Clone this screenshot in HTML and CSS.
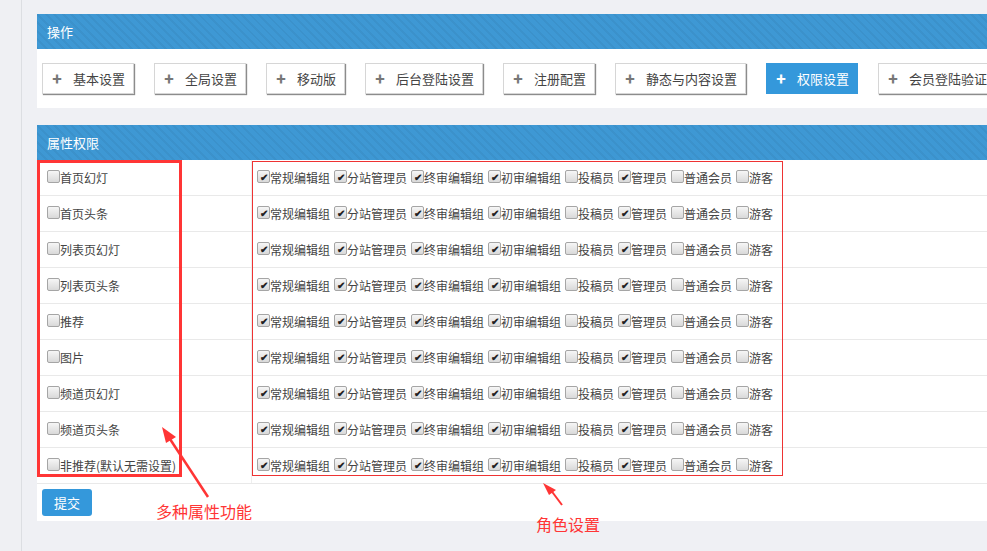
FILE: index.html
```html
<!DOCTYPE html>
<html lang="zh-CN">
<head>
    <meta charset="UTF-8">
    <title>权限设置</title>
    <link rel="stylesheet" href="styles.css">
</head>
<body>

    <div class="sidebar"></div>

    <div class="main">
        <div class="panel">
            <div class="panel-head">操作</div>
            <div class="panel-body toolbar">
                <a class="tool-btn"><span class="plus">✚</span>基本设置</a>
                <a class="tool-btn"><span class="plus">✚</span>全局设置</a>
                <a class="tool-btn"><span class="plus">✚</span>移动版</a>
                <a class="tool-btn"><span class="plus">✚</span>后台登陆设置</a>
                <a class="tool-btn"><span class="plus">✚</span>注册配置</a>
                <a class="tool-btn"><span class="plus">✚</span>静态与内容设置</a>
                <a class="tool-btn active"><span class="plus">✚</span>权限设置</a>
                <a class="tool-btn"><span class="plus">✚</span>会员登陆验证</a>
            </div>
        </div>

        <div class="panel">
            <div class="panel-head">属性权限</div>
            <div class="perm-table">
                <div class="perm-row">
                    <div class="attr"><span class="cb"></span>首页幻灯</div>
                    <div class="roles">
                        <span class="role"><span class="cb on">✔</span>常规编辑组</span>
                        <span class="role"><span class="cb on">✔</span>分站管理员</span>
                        <span class="role"><span class="cb on">✔</span>终审编辑组</span>
                        <span class="role"><span class="cb on">✔</span>初审编辑组</span>
                        <span class="role"><span class="cb"></span>投稿员</span>
                        <span class="role"><span class="cb on">✔</span>管理员</span>
                        <span class="role"><span class="cb"></span>普通会员</span>
                        <span class="role"><span class="cb"></span>游客</span>
                    </div>
                </div>
                <div class="perm-row">
                    <div class="attr"><span class="cb"></span>首页头条</div>
                    <div class="roles">
                        <span class="role"><span class="cb on">✔</span>常规编辑组</span>
                        <span class="role"><span class="cb on">✔</span>分站管理员</span>
                        <span class="role"><span class="cb on">✔</span>终审编辑组</span>
                        <span class="role"><span class="cb on">✔</span>初审编辑组</span>
                        <span class="role"><span class="cb"></span>投稿员</span>
                        <span class="role"><span class="cb on">✔</span>管理员</span>
                        <span class="role"><span class="cb"></span>普通会员</span>
                        <span class="role"><span class="cb"></span>游客</span>
                    </div>
                </div>
                <div class="perm-row">
                    <div class="attr"><span class="cb"></span>列表页幻灯</div>
                    <div class="roles">
                        <span class="role"><span class="cb on">✔</span>常规编辑组</span>
                        <span class="role"><span class="cb on">✔</span>分站管理员</span>
                        <span class="role"><span class="cb on">✔</span>终审编辑组</span>
                        <span class="role"><span class="cb on">✔</span>初审编辑组</span>
                        <span class="role"><span class="cb"></span>投稿员</span>
                        <span class="role"><span class="cb on">✔</span>管理员</span>
                        <span class="role"><span class="cb"></span>普通会员</span>
                        <span class="role"><span class="cb"></span>游客</span>
                    </div>
                </div>
                <div class="perm-row">
                    <div class="attr"><span class="cb"></span>列表页头条</div>
                    <div class="roles">
                        <span class="role"><span class="cb on">✔</span>常规编辑组</span>
                        <span class="role"><span class="cb on">✔</span>分站管理员</span>
                        <span class="role"><span class="cb on">✔</span>终审编辑组</span>
                        <span class="role"><span class="cb on">✔</span>初审编辑组</span>
                        <span class="role"><span class="cb"></span>投稿员</span>
                        <span class="role"><span class="cb on">✔</span>管理员</span>
                        <span class="role"><span class="cb"></span>普通会员</span>
                        <span class="role"><span class="cb"></span>游客</span>
                    </div>
                </div>
                <div class="perm-row">
                    <div class="attr"><span class="cb"></span>推荐</div>
                    <div class="roles">
                        <span class="role"><span class="cb on">✔</span>常规编辑组</span>
                        <span class="role"><span class="cb on">✔</span>分站管理员</span>
                        <span class="role"><span class="cb on">✔</span>终审编辑组</span>
                        <span class="role"><span class="cb on">✔</span>初审编辑组</span>
                        <span class="role"><span class="cb"></span>投稿员</span>
                        <span class="role"><span class="cb on">✔</span>管理员</span>
                        <span class="role"><span class="cb"></span>普通会员</span>
                        <span class="role"><span class="cb"></span>游客</span>
                    </div>
                </div>
                <div class="perm-row">
                    <div class="attr"><span class="cb"></span>图片</div>
                    <div class="roles">
                        <span class="role"><span class="cb on">✔</span>常规编辑组</span>
                        <span class="role"><span class="cb on">✔</span>分站管理员</span>
                        <span class="role"><span class="cb on">✔</span>终审编辑组</span>
                        <span class="role"><span class="cb on">✔</span>初审编辑组</span>
                        <span class="role"><span class="cb"></span>投稿员</span>
                        <span class="role"><span class="cb on">✔</span>管理员</span>
                        <span class="role"><span class="cb"></span>普通会员</span>
                        <span class="role"><span class="cb"></span>游客</span>
                    </div>
                </div>
                <div class="perm-row">
                    <div class="attr"><span class="cb"></span>频道页幻灯</div>
                    <div class="roles">
                        <span class="role"><span class="cb on">✔</span>常规编辑组</span>
                        <span class="role"><span class="cb on">✔</span>分站管理员</span>
                        <span class="role"><span class="cb on">✔</span>终审编辑组</span>
                        <span class="role"><span class="cb on">✔</span>初审编辑组</span>
                        <span class="role"><span class="cb"></span>投稿员</span>
                        <span class="role"><span class="cb on">✔</span>管理员</span>
                        <span class="role"><span class="cb"></span>普通会员</span>
                        <span class="role"><span class="cb"></span>游客</span>
                    </div>
                </div>
                <div class="perm-row">
                    <div class="attr"><span class="cb"></span>频道页头条</div>
                    <div class="roles">
                        <span class="role"><span class="cb on">✔</span>常规编辑组</span>
                        <span class="role"><span class="cb on">✔</span>分站管理员</span>
                        <span class="role"><span class="cb on">✔</span>终审编辑组</span>
                        <span class="role"><span class="cb on">✔</span>初审编辑组</span>
                        <span class="role"><span class="cb"></span>投稿员</span>
                        <span class="role"><span class="cb on">✔</span>管理员</span>
                        <span class="role"><span class="cb"></span>普通会员</span>
                        <span class="role"><span class="cb"></span>游客</span>
                    </div>
                </div>
                <div class="perm-row">
                    <div class="attr"><span class="cb"></span>非推荐(默认无需设置)</div>
                    <div class="roles">
                        <span class="role"><span class="cb on">✔</span>常规编辑组</span>
                        <span class="role"><span class="cb on">✔</span>分站管理员</span>
                        <span class="role"><span class="cb on">✔</span>终审编辑组</span>
                        <span class="role"><span class="cb on">✔</span>初审编辑组</span>
                        <span class="role"><span class="cb"></span>投稿员</span>
                        <span class="role"><span class="cb on">✔</span>管理员</span>
                        <span class="role"><span class="cb"></span>普通会员</span>
                        <span class="role"><span class="cb"></span>游客</span>
                    </div>
                </div>
            </div>
            <div class="form-foot">
                <button class="submit-btn">提交</button>
            </div>
        </div>
    </div>

    <!-- 标注 -->
    <div class="mark-box mark-attr"></div>
    <div class="mark-box mark-roles"></div>
    <svg class="mark-arrows" width="987" height="551" viewBox="0 0 987 551">
        <line x1="208" y1="497" x2="168" y2="436" stroke="#ff3535" stroke-width="2.5"/>
        <polygon points="162,427 176,437 166,443" fill="#ff3535"/>
        <line x1="562" y1="505" x2="550" y2="489" stroke="#ff3535" stroke-width="2"/>
        <polygon points="543,483 556,490 549,495" fill="#ff3535"/>
    </svg>
    <div class="mark-text mark-text-attr">多种属性功能</div>
    <div class="mark-text mark-text-roles">角色设置</div>

</body>
</html>
```

FILE: styles.css
```css
body {
    margin: 0;
    display: flex;
    height: 100vh;
    overflow: hidden;
    position: relative;
    background-color: #eff0f4;
    font-family: "Noto Sans CJK SC", "Noto Sans", sans-serif;
    font-size: 12px;
    color: #444;
}
.sidebar {
    width: 21px;
    flex: none;
    background-color: #eff0f3;
    border-right: 1px solid #dcdee2;
}
.main {
    flex: 1;
    padding: 14px 0 0 15px;
}
.panel {
    background-color: white;
    margin-right: -40px;
    margin-bottom: 17px;
}
.panel-head {
    height: 35px;
    line-height: 35px;
    padding-left: 10px;
    color: white;
    font-size: 13px;
    background-color: #3e98d4;
    background-image: repeating-linear-gradient(45deg, rgba(0, 0, 0, 0.045) 0 2px, transparent 2px 6px);
}
.toolbar {
    display: flex;
    gap: 20px;
    padding: 14px 5px 14px;
    white-space: nowrap;
}
.tool-btn {
    display: flex;
    align-items: center;
    height: 29px;
    padding: 0 8px 0 9px;
    background-color: white;
    border: 1px solid #d6d6d6;
    box-shadow: 1px 1px 1px rgba(0, 0, 0, 0.45);
    font-size: 13px;
    color: #444;
    flex: none;
}
.tool-btn .plus {
    font-size: 10px;
    color: #777;
    width: 8px;
    margin-right: 13px;
}
.tool-btn.active {
    background-color: #3498db;
    border-color: #3498db;
    box-shadow: none;
    color: white;
}
.tool-btn.active .plus {
    color: white;
}
.perm-row {
    display: grid;
    grid-template-columns: 215px 1fr;
    height: 35px;
    border-bottom: 1px solid #e9e9e9;
}
.attr, .roles {
    display: flex;
    align-items: center;
    white-space: nowrap;
}
.attr {
    padding-left: 10px;
    border-right: 1px solid #eeeeee;
}
.roles {
    padding-left: 5px;
}
.role {
    display: flex;
    align-items: center;
    margin-right: 4px;
}
.cb {
    display: inline-block;
    box-sizing: border-box;
    width: 13px;
    height: 13px;
    margin-top: -3px;
    border: 1px solid #a5a5a5;
    border-radius: 2px;
    background: linear-gradient(#f6f6f6, #d9d9d9);
    font-size: 10px;
    font-weight: bold;
    line-height: 11px;
    text-align: center;
    color: #222;
}
.form-foot {
    padding: 5px 5px 5px;
}
.submit-btn {
    display: block;
    width: 50px;
    height: 27px;
    border: none;
    border-radius: 3px;
    background-color: #3498db;
    color: white;
    font-family: inherit;
    font-size: 13px;
    padding: 0;
}
.mark-box {
    position: absolute;
    box-sizing: border-box;
}
.mark-attr {
    left: 37px;
    top: 160px;
    width: 145px;
    height: 317px;
    border: 3px solid #ff3535;
}
.mark-roles {
    left: 252px;
    top: 161px;
    width: 531px;
    height: 315px;
    border: 1px solid #ee3333;
}
.mark-arrows {
    position: absolute;
    left: 0;
    top: 0;
}
.mark-text {
    position: absolute;
    color: #ff3535;
    font-size: 16px;
    line-height: 20px;
}
.mark-text-attr {
    left: 156px;
    top: 501px;
}
.mark-text-roles {
    left: 536px;
    top: 514px;
}
```
